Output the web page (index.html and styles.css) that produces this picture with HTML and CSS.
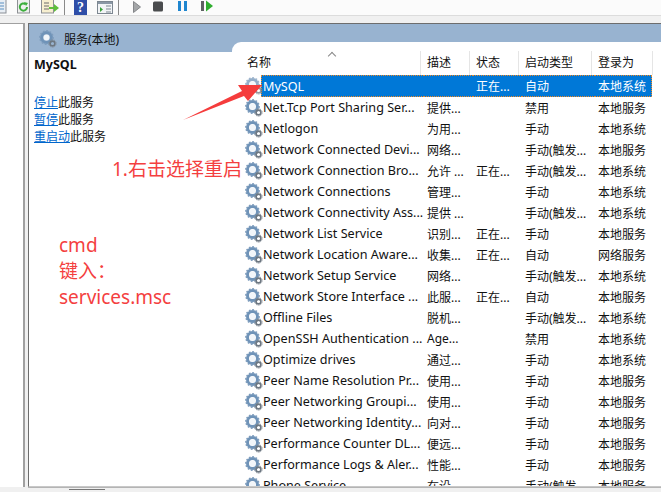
FILE: index.html
```html
<!DOCTYPE html>
<html>
<head>
<meta charset="utf-8">
<link rel="stylesheet" href="styles.css">
</head>
<body>
<svg class="defs" width="0" height="0">
    <defs>
        <symbol id="gear" viewBox="0 0 18 18">
            <circle cx="7.5" cy="7.5" r="5" fill="none" stroke="#6f93b8" stroke-width="3"/>
            <circle cx="7.5" cy="7.5" r="6.6" fill="none" stroke="#7f9dbd" stroke-width="1.6" stroke-dasharray="1.8 1.6"/>
            <circle cx="7.5" cy="7.5" r="3" fill="#f2f6fa"/>
            <circle cx="13.5" cy="13.5" r="2.4" fill="none" stroke="#6d7781" stroke-width="1.6"/>
            <circle cx="13.5" cy="13.5" r="3.7" fill="none" stroke="#828c96" stroke-width="1" stroke-dasharray="1.2 1.1"/>
        </symbol>
    </defs>
</svg>

<div class="toolbar">
    <svg class="tool" width="7" height="15" style="margin-left:0"><rect x="-6" y="-3" width="12" height="16" fill="#e8eef4" stroke="#8a8f96"/><path d="M0 3h4M0 6h4M0 9h4" stroke="#5b8fc0"/></svg>
    <svg class="tool" width="14" height="15"><rect x="0.5" y="-2" width="12" height="15" fill="#eef0ee" stroke="#8d9094"/><path d="M10 7a3.6 3.6 0 1 1-1.4-2.8" fill="none" stroke="#3cae3c" stroke-width="2"/><path d="M7 2l4 1-2 3z" fill="#3cae3c"/></svg>
    <svg class="tool" width="18" height="15"><rect x="0.5" y="-2" width="12" height="15" fill="#f7efd0" stroke="#8d9094"/><path d="M3 3h5M3 6h5M3 9h5" stroke="#6b6b6b"/><path d="M8 7h5V4l5 4-5 4V9H8z" fill="#5fbf3a"/></svg>
    <span class="tool-sep"></span>
    <svg class="tool tool-help" width="13" height="15"><rect width="13" height="15" fill="#2f4ea8"/><text x="3" y="12" class="help-mark">?</text></svg>
    <svg class="tool" width="16" height="15"><rect x="0.5" y="1.5" width="15" height="12" fill="#f2f4f6" stroke="#7d8791"/><rect x="1" y="2" width="14" height="2" fill="#8a97a5"/><path d="M3 7l3 2.5-3 2.5z" fill="#3aa33a"/><path d="M9 6h5M9 9h5M9 12h5" stroke="#7d8791"/></svg>
    <span class="tool-sep tool-sep-b"></span>
    <svg class="tool tool-play" width="8" height="15"><path d="M0.5 1.5L7.5 7L0.5 12.5z" fill="#a4a6a8" stroke="#85878a"/></svg>
    <svg class="tool tool-stop" width="10" height="15"><rect y="1.5" width="10" height="10" rx="1.5" fill="#4a4c4e"/></svg>
    <svg class="tool tool-pause" width="9" height="15"><rect y="1" width="3" height="10" fill="#1f86cf"/><rect x="6" y="1" width="3" height="10" fill="#1f86cf"/></svg>
    <svg class="tool tool-resume" width="12" height="15"><rect y="1" width="3" height="10" fill="#5f6163"/><path d="M5 0.5L12 6L5 11.5z" fill="#2fae2f"/></svg>
</div>

<div class="workspace">
    <div class="tree-pane"></div>
    <div class="main-pane">
        <div class="pane-head">
            <svg class="head-icon" width="18" height="18"><use href="#gear"/></svg>
            <span>服务(本地)</span>
        </div>
        <div class="pane-body">
            <div class="side">
                <div class="side-title">MySQL</div>
                <div class="side-links">
                    <div><a href="#">停止</a>此服务</div>
                    <div><a href="#">暂停</a>此服务</div>
                    <div><a href="#">重启动</a>此服务</div>
                </div>
            </div>
            <div class="list">
                <div class="list-head">
                    <div class="col col-name">名称<span class="sort"></span></div>
                    <div class="col col-desc">描述</div>
                    <div class="col col-state">状态</div>
                    <div class="col col-start">启动类型</div>
                    <div class="col col-login">登录为</div>
                </div>
                <div class="row selected">
                    <svg class="gear" width="18" height="18"><use href="#gear"/></svg>
                    <div class="cell cell-name">MySQL</div><div class="cell cell-desc"></div><div class="cell cell-state">正在...</div><div class="cell cell-start">自动</div><div class="cell cell-login">本地系统</div>
                </div>
                <div class="row">
                    <svg class="gear" width="18" height="18"><use href="#gear"/></svg>
                    <div class="cell cell-name">Net.Tcp Port Sharing Ser...</div><div class="cell cell-desc">提供...</div><div class="cell cell-state"></div><div class="cell cell-start">禁用</div><div class="cell cell-login">本地服务</div>
                </div>
                <div class="row">
                    <svg class="gear" width="18" height="18"><use href="#gear"/></svg>
                    <div class="cell cell-name">Netlogon</div><div class="cell cell-desc">为用...</div><div class="cell cell-state"></div><div class="cell cell-start">手动</div><div class="cell cell-login">本地系统</div>
                </div>
                <div class="row">
                    <svg class="gear" width="18" height="18"><use href="#gear"/></svg>
                    <div class="cell cell-name">Network Connected Devi...</div><div class="cell cell-desc">网络...</div><div class="cell cell-state"></div><div class="cell cell-start">手动(触发...</div><div class="cell cell-login">本地服务</div>
                </div>
                <div class="row">
                    <svg class="gear" width="18" height="18"><use href="#gear"/></svg>
                    <div class="cell cell-name">Network Connection Bro...</div><div class="cell cell-desc">允许 ...</div><div class="cell cell-state">正在...</div><div class="cell cell-start">手动(触发...</div><div class="cell cell-login">本地系统</div>
                </div>
                <div class="row">
                    <svg class="gear" width="18" height="18"><use href="#gear"/></svg>
                    <div class="cell cell-name">Network Connections</div><div class="cell cell-desc">管理...</div><div class="cell cell-state"></div><div class="cell cell-start">手动</div><div class="cell cell-login">本地系统</div>
                </div>
                <div class="row">
                    <svg class="gear" width="18" height="18"><use href="#gear"/></svg>
                    <div class="cell cell-name">Network Connectivity Ass...</div><div class="cell cell-desc">提供 ...</div><div class="cell cell-state"></div><div class="cell cell-start">手动(触发...</div><div class="cell cell-login">本地系统</div>
                </div>
                <div class="row">
                    <svg class="gear" width="18" height="18"><use href="#gear"/></svg>
                    <div class="cell cell-name">Network List Service</div><div class="cell cell-desc">识别...</div><div class="cell cell-state">正在...</div><div class="cell cell-start">手动</div><div class="cell cell-login">本地服务</div>
                </div>
                <div class="row">
                    <svg class="gear" width="18" height="18"><use href="#gear"/></svg>
                    <div class="cell cell-name">Network Location Aware...</div><div class="cell cell-desc">收集...</div><div class="cell cell-state">正在...</div><div class="cell cell-start">自动</div><div class="cell cell-login">网络服务</div>
                </div>
                <div class="row">
                    <svg class="gear" width="18" height="18"><use href="#gear"/></svg>
                    <div class="cell cell-name">Network Setup Service</div><div class="cell cell-desc">网络...</div><div class="cell cell-state"></div><div class="cell cell-start">手动(触发...</div><div class="cell cell-login">本地系统</div>
                </div>
                <div class="row">
                    <svg class="gear" width="18" height="18"><use href="#gear"/></svg>
                    <div class="cell cell-name">Network Store Interface ...</div><div class="cell cell-desc">此服...</div><div class="cell cell-state">正在...</div><div class="cell cell-start">自动</div><div class="cell cell-login">本地服务</div>
                </div>
                <div class="row">
                    <svg class="gear" width="18" height="18"><use href="#gear"/></svg>
                    <div class="cell cell-name">Offline Files</div><div class="cell cell-desc">脱机...</div><div class="cell cell-state"></div><div class="cell cell-start">手动(触发...</div><div class="cell cell-login">本地系统</div>
                </div>
                <div class="row">
                    <svg class="gear" width="18" height="18"><use href="#gear"/></svg>
                    <div class="cell cell-name">OpenSSH Authentication ...</div><div class="cell cell-desc">Age...</div><div class="cell cell-state"></div><div class="cell cell-start">禁用</div><div class="cell cell-login">本地系统</div>
                </div>
                <div class="row">
                    <svg class="gear" width="18" height="18"><use href="#gear"/></svg>
                    <div class="cell cell-name">Optimize drives</div><div class="cell cell-desc">通过...</div><div class="cell cell-state"></div><div class="cell cell-start">手动</div><div class="cell cell-login">本地系统</div>
                </div>
                <div class="row">
                    <svg class="gear" width="18" height="18"><use href="#gear"/></svg>
                    <div class="cell cell-name">Peer Name Resolution Pr...</div><div class="cell cell-desc">使用...</div><div class="cell cell-state"></div><div class="cell cell-start">手动</div><div class="cell cell-login">本地服务</div>
                </div>
                <div class="row">
                    <svg class="gear" width="18" height="18"><use href="#gear"/></svg>
                    <div class="cell cell-name">Peer Networking Groupi...</div><div class="cell cell-desc">使用...</div><div class="cell cell-state"></div><div class="cell cell-start">手动</div><div class="cell cell-login">本地服务</div>
                </div>
                <div class="row">
                    <svg class="gear" width="18" height="18"><use href="#gear"/></svg>
                    <div class="cell cell-name">Peer Networking Identity...</div><div class="cell cell-desc">向对...</div><div class="cell cell-state"></div><div class="cell cell-start">手动</div><div class="cell cell-login">本地服务</div>
                </div>
                <div class="row">
                    <svg class="gear" width="18" height="18"><use href="#gear"/></svg>
                    <div class="cell cell-name">Performance Counter DL...</div><div class="cell cell-desc">便远...</div><div class="cell cell-state"></div><div class="cell cell-start">手动</div><div class="cell cell-login">本地服务</div>
                </div>
                <div class="row">
                    <svg class="gear" width="18" height="18"><use href="#gear"/></svg>
                    <div class="cell cell-name">Performance Logs &amp; Aler...</div><div class="cell cell-desc">性能...</div><div class="cell cell-state"></div><div class="cell cell-start">手动</div><div class="cell cell-login">本地服务</div>
                </div>
                <div class="row">
                    <svg class="gear" width="18" height="18"><use href="#gear"/></svg>
                    <div class="cell cell-name">Phone Service</div><div class="cell cell-desc">在设...</div><div class="cell cell-state"></div><div class="cell cell-start">手动(触发...</div><div class="cell cell-login">本地服务</div>
                </div>
            </div>
        </div>
    </div>
</div>
<div class="tabs"><span class="tab"></span></div>

<!-- annotations drawn over the screenshot -->
<svg class="arrow" width="92" height="50" viewBox="0 0 92 50"><path d="M12 48L71 19L67 13L91 13L77 29L73 24z" fill="#f53c3c"/></svg>
<div class="note note-restart">1.右击选择重启</div>
<div class="note note-cmd">cmd<br>键入：<br>services.msc</div>
</body>
</html>
```

FILE: styles.css
```css
html, body {
    margin: 0;
    height: 492px;
    overflow: hidden;
}

body {
    position: relative;
    background-color: #f0f0f0;
    font-family: "Noto Sans", "Noto Sans CJK SC", sans-serif;
    font-size: 12px;
    color: #111;
}

.defs {
    position: absolute;
}

/* toolbar */
.toolbar {
    display: flex;
    align-items: flex-start;
    height: 15px;
    background-color: #fbfbfb;
    border-bottom: 1px solid #dcdcdc;
    overflow: hidden;
}

.tool {
    flex: none;
    margin-left: 10px;
}

.tool-sep {
    flex: none;
    width: 1px;
    height: 15px;
    margin: 0 9px 0 5px;
    background-color: #8a8a8a;
}

.tool-help {
    margin-left: 0;
}

.tool-sep-b {
    margin: 0 14px 0 5px;
}

.tool-play {
    margin-left: 0;
}

.tool-stop {
    margin-left: 12px;
}

.tool-pause {
    margin-left: 15px;
}

.tool-resume {
    margin-left: 14px;
}

.help-mark {
    font-family: "Liberation Serif", serif;
    font-size: 14px;
    font-weight: bold;
    fill: #fff;
}

/* panes */
.workspace {
    display: flex;
    height: 471px;
    padding-top: 7px;
    box-sizing: border-box;
}

.tree-pane {
    width: 23px;
    background-color: #fff;
    border-top: 1px solid #a0a0a0;
    border-right: 2px solid #a0a0a0;
}

.main-pane {
    flex: 1;
    margin-left: 3px;
    border-top: 1px solid #6d6d6d;
    border-left: 1px solid #6d6d6d;
    border-bottom: 1px solid #c8c8c8;
    background-color: #fff;
    overflow: hidden;
}

.pane-head {
    display: flex;
    align-items: center;
    height: 27px;
    padding: 1px 0 0 10px;
    background-color: #98b3d0;
}

.head-icon {
    margin-right: 7px;
}

.pane-body {
    display: flex;
    height: 434px;
}

.side {
    flex: none;
    width: 203px;
    padding: 5px 0 0 5px;
    box-sizing: border-box;
}

.side-title {
    font-size: 12.5px;
    font-weight: bold;
    line-height: 16px;
    margin-bottom: 21px;
}

.side-links {
    line-height: 17px;
}

.side-links a {
    color: #0066cc;
}

/* service list */
.list {
    flex: 1;
    margin-top: -10px;
    padding-left: 11px;
    background-color: #fff;
    border-top-left-radius: 9px;
    overflow: hidden;
}

.list-head {
    display: flex;
    height: 33px;
    align-items: flex-end;
}

.col {
    position: relative;
    flex: none;
    box-sizing: border-box;
    height: 24px;
    padding-left: 6px;
    line-height: 24px;
    border-right: 1px solid #e5e5e5;
}

.col-name {
    width: 178px;
    padding-left: 4px;
}

.col-desc {
    width: 49px;
}

.col-state {
    width: 49px;
}

.col-start {
    width: 73px;
}

.col-login {
    width: 61px;
}

.sort {
    position: absolute;
    left: 86px;
    top: 2px;
    width: 5px;
    height: 5px;
    border-top: 1px solid #888;
    border-left: 1px solid #888;
    transform: rotate(45deg);
}

.row {
    display: flex;
    align-items: center;
    width: 409px;
    height: 21px;
    white-space: nowrap;
}

.gear {
    flex: none;
    margin-left: 2px;
    margin-right: -2px;
}

.cell {
    flex: none;
    box-sizing: border-box;
    padding-left: 3px;
    overflow: hidden;
}

.cell-name {
    width: 163px;
    padding-left: 2px;
    font-size: 12.6px;
}

.cell-desc {
    width: 49px;
}

.cell-state {
    width: 49px;
}

.cell-start {
    width: 73px;
}

.cell-login {
    width: 57px;
}

.selected {
    height: 22px;
    color: #fff;
}

.selected .cell {
    height: 22px;
    line-height: 22px;
    background-color: #0078d7;
    border-top: 1px dotted #f08a24;
    border-bottom: 1px dotted #f08a24;
}

.selected .gear {
    opacity: 0.75;
}

.selected .cell-name {
    border-left: 1px dotted #f08a24;
    padding-left: 1px;
}

.selected .cell-login {
    border-right: 1px dotted #f08a24;
}

/* bottom tab strip */
.tabs {
    height: 4px;
    margin-left: 28px;
    border-top: 1px solid #b4b4b4;
}

.tab {
    display: block;
    width: 36px;
    height: 1px;
    margin: 1px 0 0 41px;
    background-color: #777;
}

/* annotations */
.arrow {
    position: absolute;
    left: 171px;
    top: 72px;
}

.note {
    position: absolute;
    color: #f43f3f;
    font-size: 19px;
}

.note-restart {
    left: 112px;
    top: 154px;
}

.note-cmd {
    left: 59px;
    top: 232px;
    line-height: 26px;
}
```
